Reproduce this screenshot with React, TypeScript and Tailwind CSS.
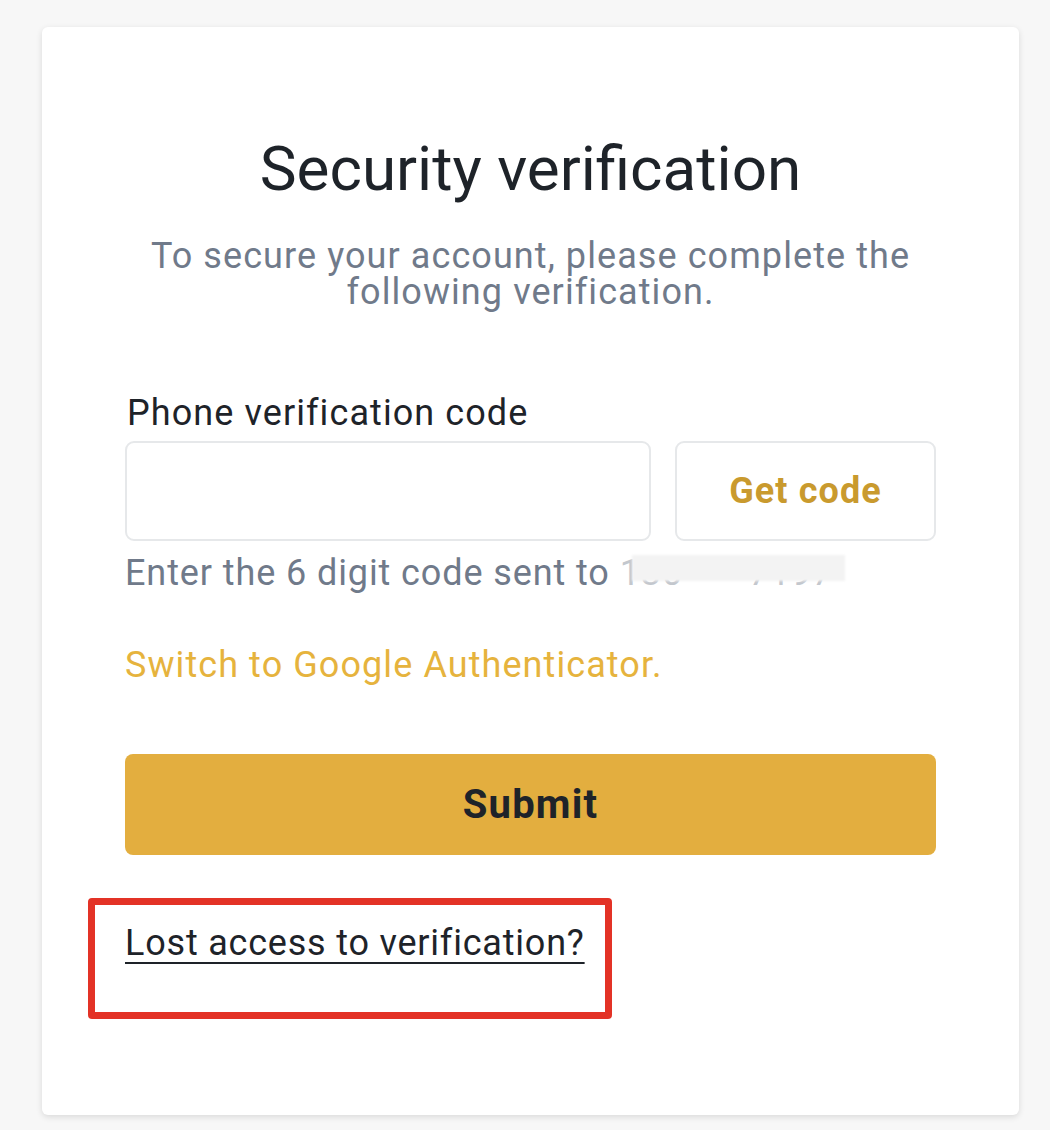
export default function App() {
  return (
    <div className="min-h-screen bg-[#f7f7f7] pt-[27px] pl-[42px]" style={{ fontFamily: 'Roboto, "Liberation Sans", sans-serif' }}>
      <div className="w-[977px] h-[1088px] bg-white rounded-md shadow-[0_2px_6px_rgba(0,0,0,0.12)] px-[83px] pt-[107px]">
        {/* Heading */}
        <h1 className="text-center text-[62px] leading-[70px] text-[#1e2329] font-normal">Security verification</h1>
        <p className="mt-[34px] text-center text-[36px] leading-[36px] tracking-[0.03em] text-[#707a8a] px-[10px]">
          To secure your account, please complete the following verification.
        </p>

        {/* Phone code */}
        <div className="mt-[83px]">
          <label className="block pl-[2px] text-[36px] leading-[40px] tracking-[0.03em] text-[#1e2329]">Phone verification code</label>
          <div className="mt-[8px] flex gap-[24px]">
            <input className="w-[526px] h-[100px] rounded-[9px] border-2 border-[#e6e8ea] px-4 text-[30px] outline-none" />
            <button className="flex-1 h-[100px] rounded-[9px] border-2 border-[#e6e8ea] text-[36px] font-bold tracking-[0.03em] text-[#c99a2e]">
              Get code
            </button>
          </div>
          <p className="mt-[12px] text-[36px] leading-[40px] tracking-[0.025em] text-[#707a8a]">
            Enter the 6 digit code sent to{' '}
            <span className="relative inline-block pr-[14px] text-[#c3c7cd]">
              130****7197
              <span className="absolute left-[12px] right-[2px] top-[2px] bottom-[12px] bg-[#f3f3f3] blur-[1px]" />
            </span>
          </p>
        </div>

        <a className="block mt-[52px] text-[36px] leading-[40px] tracking-[0.03em] text-[#e6b33d]">Switch to Google Authenticator.</a>

        <button className="mt-[69px] w-full h-[101px] rounded-[8px] bg-[#e3ae3f] text-[40px] font-bold tracking-[0.03em] text-[#1e2329]">
          Submit
        </button>

        {/* Lost access */}
        <div className="mt-[43px] -ml-[37px] w-[524px] h-[121px] border-[7px] border-[#e33226] rounded-[4px] pl-[30px] pt-[18px]">
          <a className="text-[36px] leading-[40px] tracking-[0.022em] text-[#1e2329] underline underline-offset-[7px] decoration-2">
            Lost access to verification?
          </a>
        </div>
      </div>
    </div>
  )
}
